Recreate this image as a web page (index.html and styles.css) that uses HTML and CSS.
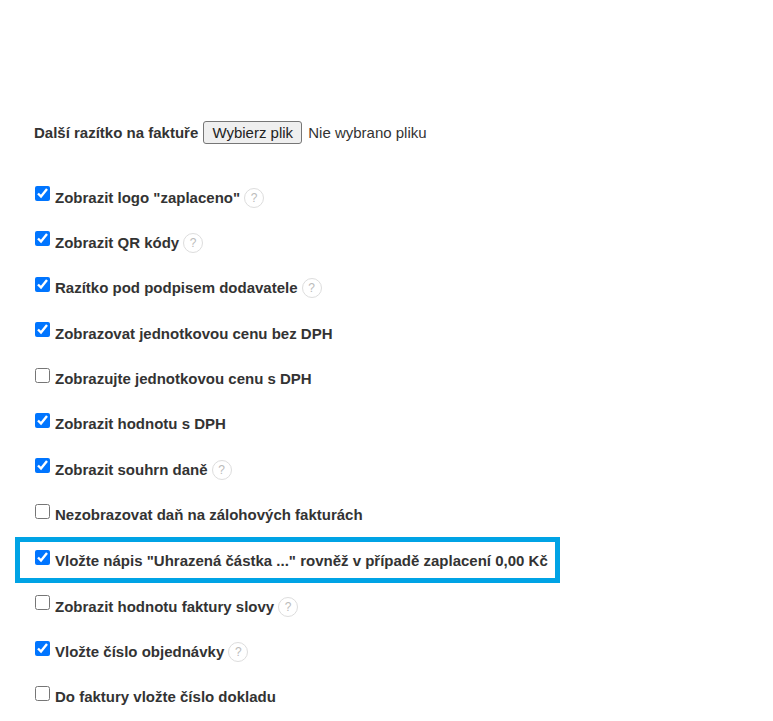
FILE: index.html
```html
<!DOCTYPE html>
<html lang="cs">
<head>
<meta charset="utf-8">
<title>Nastavení faktury</title>
<link rel="stylesheet" href="styles.css">
</head>
<body>
<form class="settings">
  <div class="stamp"><span class="name">Další razítko na faktuře</span><button class="file-button" type="button">Wybierz plik</button><span class="file-name">Nie wybrano pliku</span></div>
  <div class="row"><input type="checkbox" checked><span class="name">Zobrazit logo "zaplaceno"</span><span class="help">?</span></div>
  <div class="row"><input type="checkbox" checked><span class="name">Zobrazit QR kódy</span><span class="help">?</span></div>
  <div class="row"><input type="checkbox" checked><span class="name">Razítko pod podpisem dodavatele</span><span class="help">?</span></div>
  <div class="row"><input type="checkbox" checked><span class="name">Zobrazovat jednotkovou cenu bez DPH</span></div>
  <div class="row"><input type="checkbox"><span class="name">Zobrazujte jednotkovou cenu s DPH</span></div>
  <div class="row"><input type="checkbox" checked><span class="name">Zobrazit hodnotu s DPH</span></div>
  <div class="row"><input type="checkbox" checked><span class="name">Zobrazit souhrn daně</span><span class="help">?</span></div>
  <div class="row"><input type="checkbox"><span class="name">Nezobrazovat daň na zálohových fakturách</span></div>
  <div class="row highlighted"><input type="checkbox" checked><span class="name">Vložte nápis "Uhrazená částka ..." rovněž v případě zaplacení 0,00 Kč</span></div>
  <div class="row"><input type="checkbox"><span class="name">Zobrazit hodnotu faktury slovy</span><span class="help">?</span></div>
  <div class="row"><input type="checkbox" checked><span class="name">Vložte číslo objednávky</span><span class="help">?</span></div>
  <div class="row"><input type="checkbox"><span class="name">Do faktury vložte číslo dokladu</span></div>
</form>
</body>
</html>
```

FILE: styles.css
```css
html, body { margin: 0; padding: 0; background: #fff; }
body { height: 721px; overflow: hidden; font-family: "Liberation Sans", Arial, sans-serif; color: #333; font-size: 15px; }
.settings { padding: 121px 0 0 34px; }
.stamp { display: flex; align-items: center; height: 23px; margin-bottom: 42px; }
.file-button { box-sizing: border-box; flex: none; width: 99px; height: 23px; margin-left: 5px; padding: 0; border: 1px solid #767676; border-radius: 3px; background: #efefef; font-family: "Liberation Sans", Arial, sans-serif; font-size: 15px; color: #222; }
.file-name { margin-left: 6px; font-size: 15px; }
.row { display: flex; align-items: center; height: 22px; margin-bottom: 23.4px; }
.row input { flex: none; width: 15px; height: 15px; margin: 0 5px 7px 1px; accent-color: #0075ff; }
.name { font-weight: 700; font-size: 15px; white-space: nowrap; }
.help { box-sizing: border-box; flex: none; width: 20px; height: 20px; margin: 1px 0 0 4px; border: 1px solid #ddd; border-radius: 50%; color: #bbb; font-size: 12px; display: flex; align-items: center; justify-content: center; }
.highlighted { box-sizing: border-box; width: 545px; height: 46px; margin: -12px 0 12px -19px; padding-left: 14px; border: 5px solid #00a3e5; }
.highlighted input { margin-bottom: 5px; }
```
